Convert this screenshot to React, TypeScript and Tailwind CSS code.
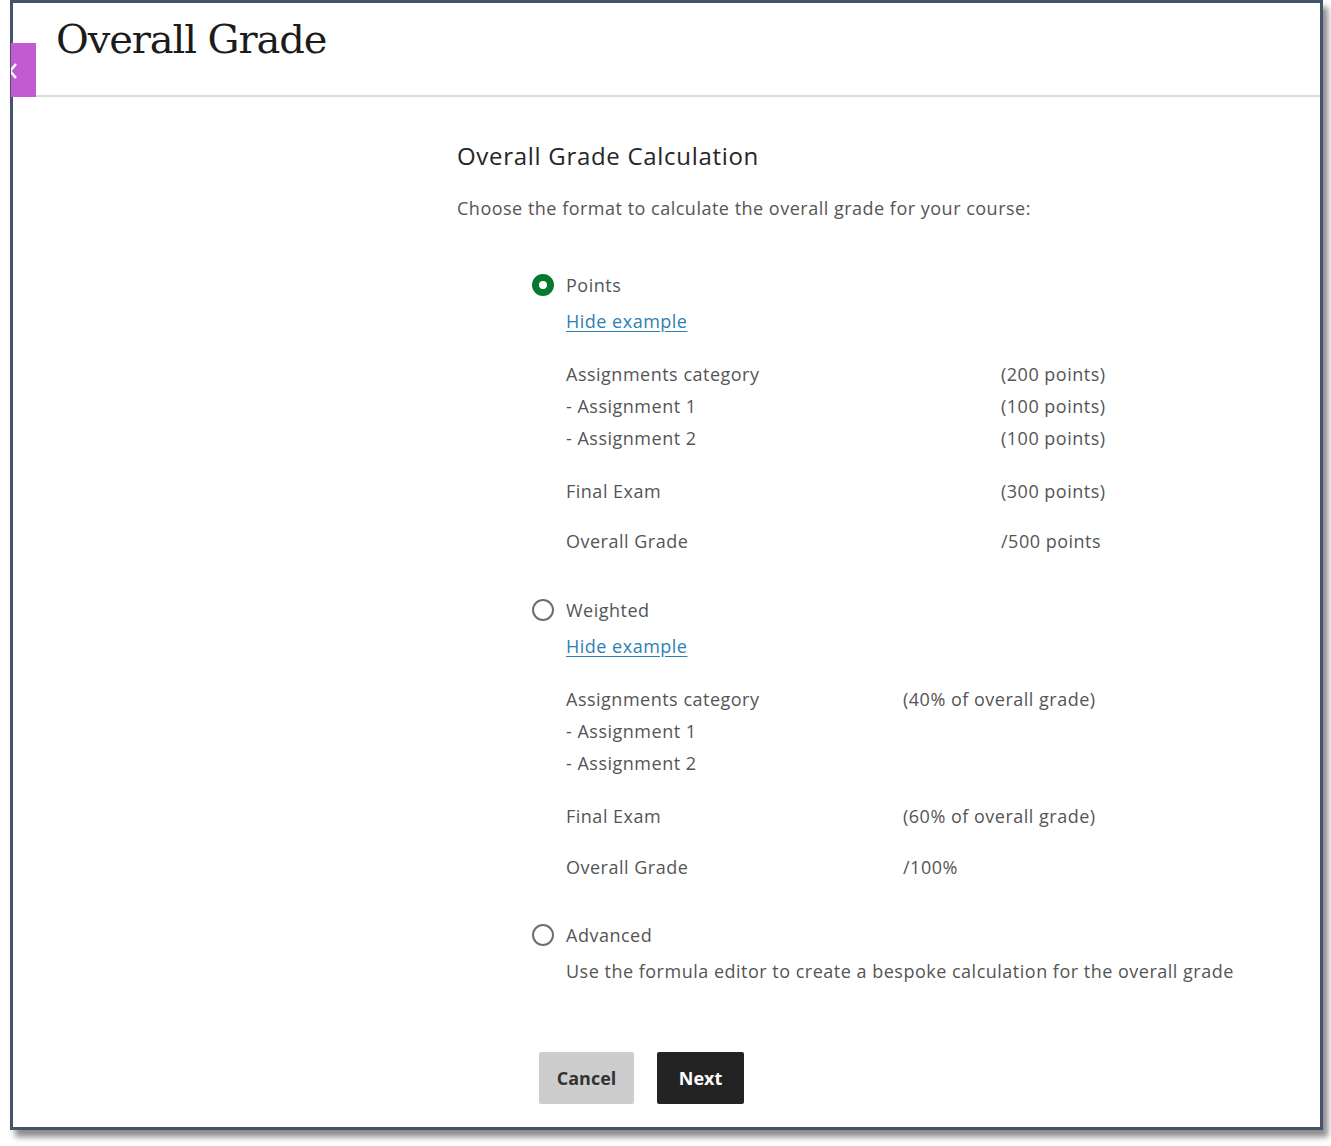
import React, { useState } from 'react';

type Row = { label: string; value?: string; gap?: number };

const pointsRows: Row[] = [
  { label: 'Assignments category', value: '(200 points)' },
  { label: '- Assignment 1', value: '(100 points)' },
  { label: '- Assignment 2', value: '(100 points)' },
  { label: 'Final Exam', value: '(300 points)', gap: 21 },
  { label: 'Overall Grade', value: '/500 points', gap: 18 },
];

const weightedRows: Row[] = [
  { label: 'Assignments category', value: '(40% of overall grade)' },
  { label: '- Assignment 1' },
  { label: '- Assignment 2' },
  { label: 'Final Exam', value: '(60% of overall grade)', gap: 21 },
  { label: 'Overall Grade', value: '/100%', gap: 19 },
];

const Radio = ({ checked }: { checked: boolean }) =>
  checked ? (
    <span className="block w-[22px] h-[22px] rounded-full border-[7px] border-[#07792f] bg-white" />
  ) : (
    <span className="block w-[22px] h-[22px] rounded-full border-2 border-[#6f6f6f] bg-white" />
  );

const Example = ({ rows, labelWidth }: { rows: Row[]; labelWidth: string }) => (
  <div className="mt-[21px]">
    {rows.map((r) => (
      <div
        key={r.label}
        className="flex h-[32px] items-center"
        style={r.gap ? { marginTop: r.gap } : undefined}
      >
        <span className={labelWidth}>{r.label}</span>
        {r.value && <span>{r.value}</span>}
      </div>
    ))}
  </div>
);

export default function App() {
  const [format, setFormat] = useState('points');

  const option = (id: string, label: string, mt: string) => (
    <button
      onClick={() => setFormat(id)}
      className={`flex h-[32px] items-center gap-[12px] tracking-[0.5px] ${mt}`}
    >
      <Radio checked={format === id} />
      <span>{label}</span>
    </button>
  );

  return (
    <div className="w-[1331px] h-[1146px] bg-white" style={{ fontFamily: '"Open Sans", sans-serif' }}>
      <div className="relative ml-[10px] w-[1313px] h-[1130px] border-[3px] border-[#44546a] bg-white shadow-[5px_7px_6px_rgba(0,0,0,0.45)]">
        {/* header */}
        <div className="h-[94px] border-b-2 border-[#dcdcdc] ml-[23px] pl-[20px] pt-[8px]">
          <h1
            className="text-[40px] leading-[56px] text-[#1c1c1c] tracking-[-1.1px]"
            style={{ fontFamily: '"DejaVu Serif", serif' }}
          >
            Overall Grade
          </h1>
        </div>
        <div className="absolute left-[-2px] top-[40px] w-[25px] h-[54px] bg-[#c25bd2] overflow-hidden">
          <svg className="absolute left-[-4px] top-[19px]" width="12" height="18" viewBox="0 0 12 18">
            <path d="M9 2 L3 9 L9 16" fill="none" stroke="#fff" strokeWidth="2.5" />
          </svg>
        </div>

        {/* body */}
        <div className="ml-[444px] mt-[43px] text-[18px] text-[#555555] tracking-[0.5px]">
          <h2 className="text-[24px] leading-[32px] font-medium text-[#262626] tracking-[0.7px]">
            Overall Grade Calculation
          </h2>
          <p className="mt-[20px] leading-[32px]">Choose the format to calculate the overall grade for your course:</p>

          <div className="ml-[75px]">
            {option('points', 'Points', 'mt-[45px]')}
            <div className="ml-[34px]">
              <a href="#" className="block mt-[4px] leading-[32px] text-[#2d7fb4] underline underline-offset-[3px]">
                Hide example
              </a>
              <Example rows={pointsRows} labelWidth="w-[435px]" />
            </div>

            {option('weighted', 'Weighted', 'mt-[37px]')}
            <div className="ml-[34px]">
              <a href="#" className="block mt-[4px] leading-[32px] text-[#2d7fb4] underline underline-offset-[3px]">
                Hide example
              </a>
              <Example rows={weightedRows} labelWidth="w-[337px]" />
            </div>

            {option('advanced', 'Advanced', 'mt-[36px]')}
            <p className="ml-[34px] mt-[4px] leading-[32px]">
              Use the formula editor to create a bespoke calculation for the overall grade
            </p>
          </div>

          <div className="mt-[65px] ml-[82px] flex gap-[23px] tracking-normal">
            <button className="w-[95px] h-[52px] rounded-[2px] bg-[#cdcdcd] text-[#333] font-bold">Cancel</button>
            <button className="w-[87px] h-[52px] rounded-[2px] bg-[#232323] text-white font-bold">Next</button>
          </div>
        </div>
      </div>
    </div>
  );
}
